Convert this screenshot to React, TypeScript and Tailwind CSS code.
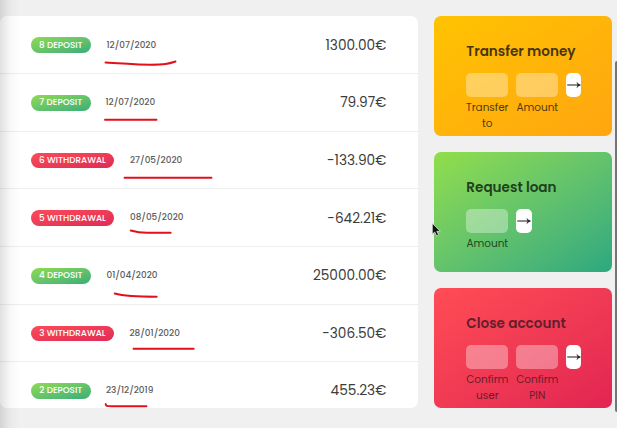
type Movement = {
  id: number;
  kind: 'deposit' | 'withdrawal';
  date: string;
  dateClass: string;
  value: string;
};

const movements: Movement[] = [
  { id: 8, kind: 'deposit', date: '12/07/2020', dateClass: 'ml-4', value: '1300.00€' },
  { id: 7, kind: 'deposit', date: '12/07/2020', dateClass: 'ml-[15px]', value: '79.97€' },
  { id: 6, kind: 'withdrawal', date: '27/05/2020', dateClass: 'ml-4', value: '-133.90€' },
  { id: 5, kind: 'withdrawal', date: '08/05/2020', dateClass: 'ml-4', value: '-642.21€' },
  { id: 4, kind: 'deposit', date: '01/04/2020', dateClass: 'ml-4', value: '25000.00€' },
  { id: 3, kind: 'withdrawal', date: '28/01/2020', dateClass: 'ml-[15.5px]', value: '-306.50€' },
  { id: 2, kind: 'deposit', date: '23/12/2019', dateClass: 'ml-[15.5px]', value: '455.23€' },
];

function MovementRow({ item }: { item: Movement }) {
  const badge =
    item.kind === 'deposit'
      ? 'w-[59.5px] from-[#8edb4d] to-[#36ad7a]'
      : 'w-[83px] from-[#fb4b58] to-[#e02a55]';
  return (
    <div className="flex h-[57.65px] shrink-0 items-center border-b border-[#eeeeee] pt-px pr-8 pl-[31px]">
      <span className={`flex h-[15.5px] items-center justify-center rounded-full bg-linear-to-br text-[8.8px] font-medium whitespace-nowrap text-white uppercase ${badge}`}>
        {item.id} {item.kind}
      </span>
      <span className={`text-[8.9px] font-medium text-[#5c5c5c] ${item.dateClass}`}>{item.date}</span>
      <span className="ml-auto pt-[1.4px] text-[13.7px] text-[#3c3c3c]">{item.value}</span>
    </div>
  );
}

function Arrow() {
  return (
    <svg viewBox="0 0 14 8" className="mt-px h-2 w-3.5 shrink-0" fill="none" stroke="#1d1d1d">
      <path d="M.2 4h12.500" strokeWidth="1.1" />
      <path d="M10 1.500Q11.300 3.500 13.500 4 11.300 4.500 10 6.500L10.900 4Z" fill="#1d1d1d" strokeWidth=".5" />
    </svg>
  );
}

type OperationProps = {
  title: string;
  labels: string[];
  card: string;
  titleClass: string;
  buttonClass: string;
};

function Operation({ title, labels, card, titleClass, buttonClass }: OperationProps) {
  return (
    <section className={`h-[120px] rounded-[7px] bg-linear-to-br pt-[25.4px] pl-8 ${card}`}>
      <h2 className={`h-5 text-[13.6px] leading-5 font-semibold whitespace-nowrap ${titleClass}`}>{title}</h2>
      <form className="mt-[11.1px] flex gap-2" onSubmit={(e) => e.preventDefault()}>
        {labels.map((label) => (
          <label key={label} className="flex w-[42px] flex-col items-center">
            <input className="h-6 w-full rounded-[5px] bg-white/35 outline-none" />
            <span className="mt-[3.3px] text-center text-[10.5px] leading-4 tracking-[-0.05px]">{label}</span>
          </label>
        ))}
        <button aria-label={title} className={`flex h-6 items-center justify-center overflow-hidden rounded-[5px] bg-white ${buttonClass}`}>
          <Arrow />
        </button>
      </form>
    </section>
  );
}

export default function App() {
  return (
    <main className="relative flex h-[428px] w-[617px] gap-4 overflow-hidden bg-[#f0f0f0] pt-[16.4px] font-['Poppins','Inter',sans-serif]">
      <div className="flex h-[392px] w-[418.3px] shrink-0 flex-col overflow-hidden rounded-[7px] bg-white">
        {movements.map((m) => (
          <MovementRow key={m.id} item={m} />
        ))}
      </div>
      <aside className="flex w-[178px] shrink-0 flex-col gap-4">
        <Operation
          title="Transfer money"
          labels={['Transfer to', 'Amount']}
          card="from-[#ffc300] to-[#ffa510] text-[#523a0c]"
          titleClass="text-[#493611]"
          buttonClass="w-[15px]"
        />
        <Operation
          title="Request loan"
          labels={['Amount']}
          card="from-[#91de48] to-[#2ba87f] text-[#234723]"
          titleClass="text-[#20401c]"
          buttonClass="w-4"
        />
        <Operation
          title="Close account"
          labels={['Confirm user', 'Confirm PIN']}
          card="from-[#ff4c55] to-[#e22452] text-[#6e1b2a]"
          titleClass="text-[#641e2b]"
          buttonClass="w-[15px]"
        />
      </aside>
      <div className="pointer-events-none absolute inset-y-0 left-0 w-5 bg-linear-to-r from-black/12 via-black/3 to-transparent" />
      <div className="absolute top-[61px] right-0 h-[351px] w-[1.6px] rounded-l-sm bg-[#747474]" />
      <svg className="pointer-events-none absolute inset-0" width="617" height="428" viewBox="0 0 617 428" fill="none">
        {/* Hand-drawn marks under the dates */}
        <g stroke="#e2101b" strokeWidth="1.9" strokeLinecap="round" strokeLinejoin="round">
          <path d="M105.5 62.5C120 63 135 64.7 150 64.7S168 64 175.500 61.500" />
          <path d="M105 119.700H156.500" />
          <path d="M124.500 177.700H211.500" />
          <path d="M130.700 230.500C138 232.500 142 232.700 147 232.700H170.700" />
          <path d="M114.700 293.500C124 296 133 296.700 156.700 296.700" />
          <path d="M133.500 348.700H193.700" />
          <path d="M105.700 403.900C105.700 406 106.500 406.300 112 406.300H146.500" />
        </g>
        {/* Mouse pointer */}
        <path d="M432.300 223.300V234.200L434.700 232 436.700 236 438.600 235 436.800 231.300H440.200Z" fill="#111" stroke="#eee" strokeWidth=".7" />
      </svg>
    </main>
  );
}
